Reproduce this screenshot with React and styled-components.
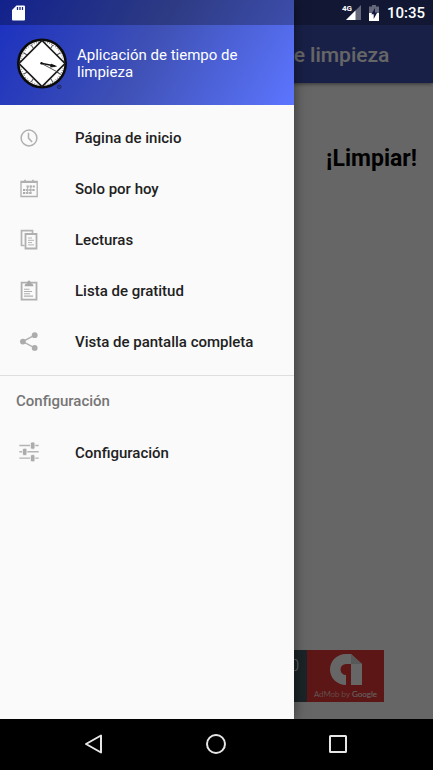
import React from 'react';
import styled, { createGlobalStyle } from 'styled-components';

const menuItems = [
    { label: 'Página de inicio', icon: ClockIcon },
    { label: 'Solo por hoy', icon: CalendarIcon },
    { label: 'Lecturas', icon: PagesIcon },
    { label: 'Lista de gratitud', icon: ClipboardIcon },
    { label: 'Vista de pantalla completa', icon: ShareIcon },
];

const settingsItems = [
    { label: 'Configuración', icon: TuneIcon },
];

function ClockIcon() {
    return (
        <Icon viewBox="0 0 20 20" aria-hidden="true">
            <circle cx="10" cy="10" r="7.9" fill="none" stroke="#b0b0b0" strokeWidth="1.5" />
            <path d="M9.5 4.8v5.300l3.600 4" fill="none" stroke="#b0b0b0" strokeWidth="1.500" />
        </Icon>
    );
}

function CalendarIcon() {
    return (
        <Icon viewBox="0 0 20 20" aria-hidden="true">
            <path d="M2 2.500h16.200v15H2z" fill="none" stroke="#b0b0b0" strokeWidth="1.300" />
            <path d="M2 3.200h16.200M6 .8v3M14 .8v3" fill="none" stroke="#b0b0b0" strokeWidth="1.700" />
            <path d="M7.500 7.500h8.300M4 11h11.800M4 14h8.500" stroke="#aaa" strokeWidth="2.200" strokeDasharray="2.300 .8" />
            <path d="M11.800 6.500v8M8.600 7v8" stroke="#b4b4b4" strokeWidth="1" />
        </Icon>
    );
}

function PagesIcon() {
    return (
        <Icon viewBox="0 0 20 20" aria-hidden="true">
            <path d="M5.500 15.500H2.500V.6h11v2.700" fill="none" stroke="#b4b4b4" strokeWidth="1.700" />
            <path d="M6.500 4h11v14.500h-11z" fill="none" stroke="#b0b0b0" strokeWidth="1.800" />
            <path d="M9 8h4M9 10.300h6M9 12.600h4M9 14.900h6" stroke="#b4b4b4" strokeWidth="1" />
        </Icon>
    );
}

function ClipboardIcon() {
    return (
        <Icon viewBox="0 0 20 20" aria-hidden="true">
            <path d="M2.600 1.700h14.900v17H2.600z" fill="none" stroke="#b0b0b0" strokeWidth="1.800" />
            <path d="M5.600 5.200c0-2 1.300-2.800 2.800-3.300C8.500.3 9.200-.4 10-.4s1.500.7 1.600 2.300c1.500.5 2.900 1.300 2.900 3.300z" fill="#a8a8a8" />
            <path d="M5 8.200h5.500M5 10.500h8M5 12.800h6M5 15.100h9" stroke="#b0b0b0" strokeWidth="1.100" />
        </Icon>
    );
}

function ShareIcon() {
    return (
        <Icon viewBox="0 0 20 20" aria-hidden="true">
            <path d="M15.700 3.200l-12 6.400 12 6.300" fill="none" stroke="#b0b0b0" strokeWidth="1.400" />
            <g fill="#acacac">
                <circle cx="15.700" cy="3.200" r="2.900" />
                <circle cx="3.900" cy="9.600" r="2.900" />
                <circle cx="15.700" cy="15.900" r="2.900" />
            </g>
        </Icon>
    );
}

function TuneIcon() {
    return (
        <Icon viewBox="0 0 20 20" aria-hidden="true">
            <path d="M.3 2.500h19.400M.3 8.800h19.400M.3 15.100h19.400" stroke="#b4b4b4" strokeWidth="1.400" />
            <g fill="#acacac" stroke="#fafafa" strokeWidth=".7">
                <rect x="11.500" y="-1" width="4.400" height="7.200" rx="1.500" />
                <rect x="3.500" y="5.300" width="4.400" height="7.200" rx="1.500" />
                <rect x="11.500" y="11.600" width="4.400" height="7.200" rx="1.500" />
            </g>
        </Icon>
    );
}

function ClockLogo() {
    const ticks = Array.from({ length: 12 }, (_, i) => i * 30);
    return (
        <Logo viewBox="0 0 52 52" aria-hidden="true">
            <circle cx="26" cy="25.500" r="23.700" fill="#fff" stroke="#0b0b0b" strokeWidth="2.600" />
            {ticks.map(angle => (
                <path
                    key={angle}
                    d="M26 4v4"
                    stroke="#555"
                    strokeWidth="1"
                    transform={`rotate(${angle} 26 25.500)`}
                />
            ))}
            <circle cx="26" cy="25.500" r="21.500" fill="none" stroke="#777" strokeWidth="1.200" strokeDasharray=".8 1.450" />
            <path d="M26 2.500l23 23-23 23-23-23z" fill="#fff" stroke="#1a1a1a" strokeWidth="1.700" />
            <path d="M25 25.200l14 2.800" stroke="#111" strokeWidth="1.500" />
            <path d="M35 26l5.500 2.300-6 .9z" fill="#111" stroke="#111" strokeWidth=".5" />
            <path d="M25.500 25.500l17 9" stroke="#444" strokeWidth=".9" />
            <circle cx="25.500" cy="25.300" r="1.200" fill="#111" />
            <circle cx="43.200" cy="48.800" r="1.800" fill="none" stroke="#1c2450" strokeWidth=".9" />
            <circle cx="43.200" cy="48.800" r=".7" fill="#1c2450" />
        </Logo>
    );
}

function StatusBar() {
    return (
        <Status>
            <svg width="13" height="16" viewBox="0 0 13 16" aria-hidden="true">
                <path d="M4.500.5H12a1 1 0 0 1 1 1v13a1 1 0 0 1-1 1H1a1 1 0 0 1-1-1V5z" fill="#fff" />
                <path d="M5.500 2v3M8 2v3M10.500 2v3" stroke="#1c2a84" strokeWidth="1.300" />
            </svg>
            <StatusGroup>
                <Network>
                    <NetworkLabel>4G</NetworkLabel>
                    <svg width="15" height="15" viewBox="0 0 15 15" aria-hidden="true">
                        <path d="M15 0v15H0z" fill="#fff" opacity=".35" />
                        <path d="M9.500 5.500V15H0z" fill="#fff" />
                    </svg>
                </Network>
                <svg width="10" height="16" viewBox="0 0 10 16" aria-hidden="true">
                    <path d="M3 0h4v1.500h3V8H0V1.500h3z" fill="#fff" opacity=".35" />
                    <path d="M0 8h10v8H0z" fill="#fff" />
                    <path d="M6 3L2.300 9.300h2.400V14l3.600-6.500H6z" fill="#141a42" />
                </svg>
                <Time>10:35</Time>
            </StatusGroup>
        </Status>
    );
}

function AdBanner() {
    return (
        <Ad>
            <AdCopy>0</AdCopy>
            <AdBrand>
                <svg width="32" height="32" viewBox="0 0 32 32" aria-hidden="true">
                    <path d="M16 31C7 31 0 24 0 15.500 0 7 7 0 16 0h5l11 10v21H21V10h-5a5.500 5.500 0 0 0 0 11z" fill="#fff" />
                    <path d="M21 10h11L21 0z" fill="#ddd" />
                </svg>
                <AdText>AdMob by <b>Google</b></AdText>
            </AdBrand>
        </Ad>
    );
}

function MenuList({ items }) {
    return (
        <List>
            {items.map(({ label, icon: ItemIcon }) => (
                <li key={label}>
                    <MenuLink href="#">
                        <ItemIcon />
                        {label}
                    </MenuLink>
                </li>
            ))}
        </List>
    );
}

function App() {
    return (
        <Device>
            <GlobalStyle />
            <Screen>
                <AppBar>
                    <Title>Aplicación de tiempo de limpieza</Title>
                </AppBar>
                <Content>
                    <Heading>¡Limpiar!</Heading>
                    <AdBanner />
                </Content>
                <Scrim />
                <Drawer>
                    <DrawerHeader>
                        <ClockLogo />
                        <DrawerTitle>Aplicación de tiempo de limpieza</DrawerTitle>
                    </DrawerHeader>
                    <MenuList items={menuItems} />
                    <Section>
                        <SectionTitle>Configuración</SectionTitle>
                        <MenuList items={settingsItems} />
                    </Section>
                </Drawer>
                <StatusBar />
            </Screen>
            <NavBar>
                <NavButton aria-label="Atrás">
                    <svg width="22" height="22" viewBox="0 0 22 22" aria-hidden="true">
                        <path d="M18 2.500v17L3 11z" />
                    </svg>
                </NavButton>
                <NavButton aria-label="Inicio">
                    <svg width="22" height="22" viewBox="0 0 22 22" aria-hidden="true">
                        <circle cx="11" cy="11" r="9" />
                    </svg>
                </NavButton>
                <NavButton aria-label="Recientes">
                    <svg width="22" height="22" viewBox="0 0 22 22" aria-hidden="true">
                        <rect x="3" y="3" width="16" height="16" rx=".5" />
                    </svg>
                </NavButton>
            </NavBar>
        </Device>
    );
}

export default App;

const GlobalStyle = createGlobalStyle`
    * {
        box-sizing: border-box;
    }

    body {
        margin: 0;
        font-family: Roboto, "Liberation Sans", sans-serif;
        color: #212121;
        background: #000;
    }
`;

const Device = styled.div`
    display: flex;
    flex-direction: column;
    min-height: 100vh;
`;

const Screen = styled.div`
    position: relative;
    flex: 1;
    display: flex;
    flex-direction: column;
    background: #fff;
`;

const AppBar = styled.header`
    position: relative;
    display: flex;
    align-items: center;
    height: 83px;
    padding: 27px 16px 0 79px;
    background: #3f51b5;
    box-shadow: 0 1px 4px rgba(0, 0, 0, 0.5);
`;

const Title = styled.h1`
    margin: 0;
    font-size: 21px;
    font-weight: 500;
    white-space: nowrap;
    color: #fff;
`;

const Content = styled.main`
    flex: 1;
    display: flex;
    flex-direction: column;
    justify-content: space-between;
    padding: 61px 16px 17px;
`;

const Heading = styled.h2`
    margin: 0;
    font-size: 23px;
    line-height: 30px;
    font-weight: 700;
    text-align: right;
    color: #000;
`;

const Ad = styled.aside`
    display: flex;
    align-self: center;
    width: 335px;
    max-width: 100%;
    height: 52px;
    background: #455a64;
    color: #fff;
`;

const AdCopy = styled.span`
    flex: 1;
    padding: 6px 8px;
    font-size: 16px;
    font-weight: 300;
    text-align: right;
`;

const AdBrand = styled.div`
    display: flex;
    flex-direction: column;
    align-items: center;
    justify-content: space-between;
    width: 77px;
    padding: 4px 0 3px;
    background: #e53935;
`;

const AdText = styled.span`
    font-family: Lato, sans-serif;
    font-size: 8px;
    line-height: 10px;
    font-weight: 300;

    b {
        font-weight: 400;
    }
`;

const Scrim = styled.div`
    position: absolute;
    inset: 0;
    background: rgba(0, 0, 0, 0.6);
`;

const Drawer = styled.nav`
    position: absolute;
    top: 0;
    bottom: 0;
    left: 0;
    width: 68%;
    background: #fafafa;
    box-shadow: 0 0 12px rgba(0, 0, 0, 0.5);
`;

const DrawerHeader = styled.div`
    display: flex;
    align-items: center;
    gap: 9px;
    height: 105px;
    padding: 22px 16px 0;
    background: linear-gradient(120deg, #1a2fc0, #3f51b5 50%, #5c75ff);
`;

const Logo = styled.svg`
    flex: none;
    width: 52px;
    height: 52px;
`;

const DrawerTitle = styled.span`
    font-size: 15px;
    line-height: 17px;
    color: #fff;
`;

const List = styled.ul`
    margin: 0;
    padding: 0;
    list-style: none;

    ${DrawerHeader} + & {
        padding: 7px 0 8px;
    }
`;

const MenuLink = styled.a`
    display: flex;
    align-items: center;
    gap: 36px;
    height: 51px;
    padding: 0 19px;
    font-size: 15px;
    font-weight: 500;
    white-space: nowrap;
    color: #212121;
    text-decoration: none;
`;

const Icon = styled.svg`
    flex: none;
    width: 20px;
    height: 20px;
    overflow: visible;
`;

const Section = styled.section`
    border-top: 1px solid #dedede;
`;

const SectionTitle = styled.h3`
    margin: 0;
    padding: 0 16px;
    font-size: 15px;
    line-height: 51px;
    font-weight: 500;
    color: #757575;
`;

const Status = styled.div`
    position: absolute;
    top: 0;
    left: 0;
    right: 0;
    display: flex;
    align-items: center;
    justify-content: space-between;
    height: 25px;
    padding: 0 8px 0 12px;
    background: rgba(0, 0, 0, 0.27);
    color: #fff;
`;

const StatusGroup = styled.div`
    display: flex;
    align-items: center;
    gap: 8px;
`;

const Network = styled.div`
    display: flex;
    align-items: center;
`;

const NetworkLabel = styled.span`
    align-self: flex-start;
    margin-right: -6px;
    font-size: 8px;
    line-height: 8px;
    font-weight: 700;
`;

const Time = styled.time`
    font-size: 15px;
    font-weight: 500;
`;

const NavBar = styled.footer`
    display: flex;
    align-items: center;
    justify-content: center;
    gap: 78px;
    height: 51px;
    padding: 0 2px 2px 0;
    background: #000;
`;

const NavButton = styled.button`
    display: flex;
    justify-content: center;
    width: 44px;
    padding: 0;
    border: 0;
    background: none;
    cursor: pointer;

    svg {
        fill: none;
        stroke: #e6e6e6;
        stroke-width: 2;
        stroke-linejoin: round;
    }
`;
